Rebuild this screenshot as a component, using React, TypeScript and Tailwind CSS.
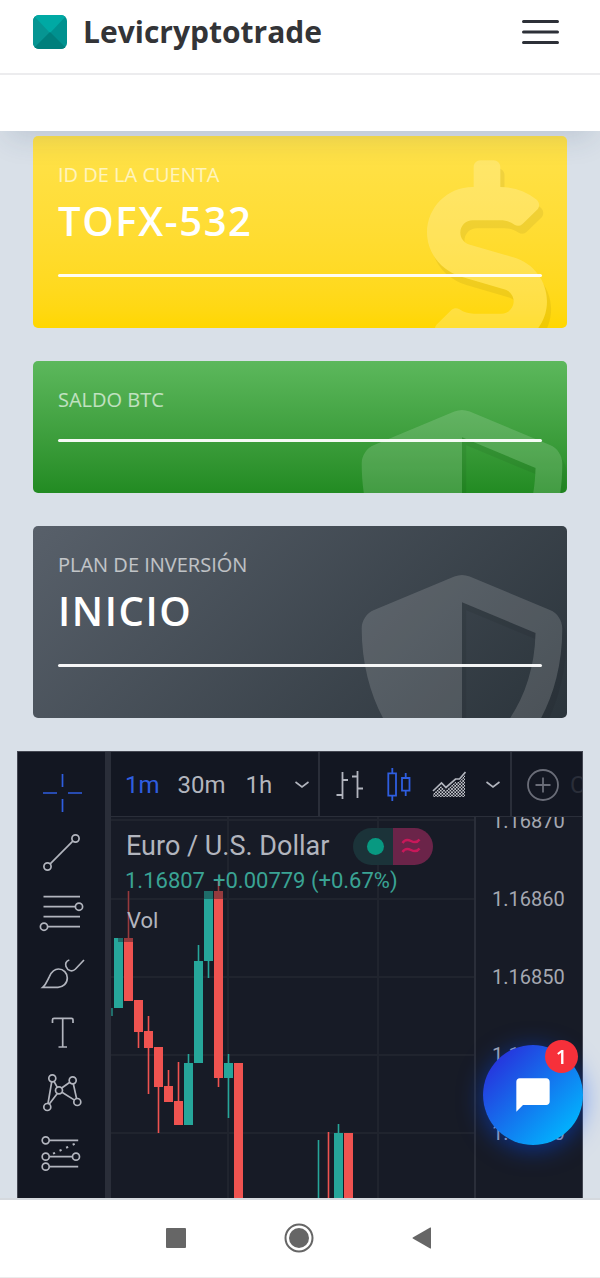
import { useId, type ReactNode } from "react";
import clsx from "clsx";

interface Candle {
  x: number;
  top: number;
  bottom: number;
  high?: number;
  low?: number;
  up?: boolean;
}

const UP = "#26a69a";
const DOWN = "#ef5350";

const candles: Candle[] = [
  { x: 3, top: 121, bottom: 191, up: true },
  { x: 13, top: 121, bottom: 184, high: 74 },
  { x: 23, top: 183, bottom: 215, low: 231 },
  { x: 33, top: 214, bottom: 231, high: 199, low: 277 },
  { x: 43, top: 230, bottom: 270, low: 316 },
  { x: 53, top: 269, bottom: 285, high: 253 },
  { x: 63, top: 284, bottom: 308, high: 245 },
  { x: 73, top: 246, bottom: 308, high: 237, up: true },
  { x: 83, top: 144, bottom: 246, high: 128, up: true },
  { x: 93, top: 74, bottom: 144, low: 161, up: true },
  { x: 103, top: 74, bottom: 261, high: 64, low: 270 },
  { x: 113, top: 246, bottom: 261, high: 237, low: 301, up: true },
  { x: 123, top: 246, bottom: 420 },
  { x: 203, top: 410, bottom: 430, high: 323, up: true },
  { x: 213, top: 410, bottom: 430, high: 315 },
  { x: 223, top: 316, bottom: 430, high: 307, up: true },
  { x: 233, top: 316, bottom: 430 },
];

const gridRows = [3, 82, 160, 238, 316];
const gridCols = [117, 267, 417, 567, 717];
const prices = ["1.16870", "1.16860", "1.16850", "1.16840", "1.16830"];

const watermarks = {
  dollar: {
    viewBox: "0 0 288 512",
    className: "right-5 top-6 w-[120px] text-white/20",
    path: "M209.2 233.4l-108-31.6C88.7 198.2 80 186.5 80 173.5c0-16.3 13.2-29.5 29.5-29.5h66.3c12.2 0 24.2 3.7 34.2 10.5 6.1 4.1 14.3 3.1 19.5-2l34.8-34c7.1-6.9 6.1-18.4-1.8-24.5C238 74.8 207.4 64.1 176 64V16c0-8.8-7.2-16-16-16h-32c-8.8 0-16 7.2-16 16v48h-2.5C45.8 64-5.4 118.7.5 183.6c4.2 46.1 39.4 83.6 83.8 96.6l102.5 30c12.5 3.7 21.2 15.3 21.2 28.3 0 16.3-13.2 29.5-29.5 29.5h-66.3C100 368 88 364.3 78 357.5c-6.1-4.1-14.3-3.1-19.5 2l-34.8 34c-7.1 6.9-6.1 18.4 1.8 24.5 24.5 19.2 55.1 29.9 86.5 30v48c0 8.8 7.2 16 16 16h32c8.8 0 16-7.2 16-16v-48.2c46.6-.9 90.3-28.6 105.7-72.7 21.5-61.6-14.6-124.8-72.5-141.7z",
  },
  shield: {
    viewBox: "0 0 512 512",
    className: "-right-0.5 top-[49px] w-[214px] text-white/15",
    path: "M466.5 83.7l-192-80a48.15 48.15 0 0 0-36.9 0l-192 80C27.7 91.1 16 108.6 16 128c0 198.5 114.5 335.7 221.5 380.3 11.8 4.9 25.1 4.9 36.9 0C360.1 472.6 496 349.3 496 128c0-19.4-11.7-36.9-29.5-44.3zM256.1 446.3l-.1-381 175.9 73.3c-3.3 151.4-82.1 261.1-175.8 307.7z",
  },
};

// translucent icon whose shadow only shows outside its own shape
function Watermark({ icon }: { icon: keyof typeof watermarks }) {
  const maskId = useId();
  const { viewBox, className, path } = watermarks[icon];

  return (
    <svg
      className={clsx("absolute h-[214px] overflow-visible", className)}
      viewBox={viewBox}
      aria-hidden="true"
    >
      <mask id={maskId} maskUnits="userSpaceOnUse" x="-20" y="-20" width="600" height="600">
        <rect x="-20" y="-20" width="600" height="600" fill="#fff" />
        <path d={path} fill="#000" />
      </mask>
      <g mask={`url(#${maskId})`}>
        <path d={path} transform="translate(10 19)" fill="#000" opacity="0.06" />
      </g>
      <path d={path} fill="currentColor" />
    </svg>
  );
}

interface AccountCardProps {
  label: string;
  value?: string;
  className: string;
  icon: keyof typeof watermarks;
}

function AccountCard({ label, value, className, icon }: AccountCardProps) {
  return (
    <section
      className={clsx(
        "relative mx-4 overflow-hidden rounded-[5px] px-[25px] pt-[23px] pb-[51px]",
        className,
      )}
    >
      <Watermark icon={icon} />
      <div className="relative">
        <h2 className="text-[20px] leading-8 text-white/65">{label}</h2>
        {value && (
          <p className="text-[40px] leading-[60px] font-semibold tracking-[0.04em] text-white">
            {value}
          </p>
        )}
        <div className="mt-[23px] h-[3px] rounded-full bg-white/95" />
      </div>
    </section>
  );
}

function Tool({ label, active, children }: { label: string; active?: boolean; children: ReactNode }) {
  return (
    <button
      aria-label={label}
      className={clsx(
        "flex h-[60px] w-full shrink-0 items-center justify-center",
        active ? "text-[#2f5ee0]" : "text-[#b2b5be]",
      )}
    >
      <svg
        className="size-12"
        viewBox="0 0 48 48"
        fill="none"
        stroke="currentColor"
        strokeWidth="1.7"
      >
        {children}
      </svg>
    </button>
  );
}

function DrawingTools() {
  return (
    <div className="flex w-[93px] shrink-0 flex-col border-r-[6px] border-[#2a2e39] bg-[#131722] pt-[11px]">
      <Tool label="Cruz" active>
        <path d="M24.5 5v13M24.5 30v13M5 24h14M30 24h14" />
      </Tool>
      <Tool label="Línea de tendencia">
        <circle cx="37.5" cy="9.5" r="3.6" />
        <circle cx="9.5" cy="37.5" r="3.6" />
        <path d="M12.2 34.8 34.8 12.2" />
      </Tool>
      <Tool label="Retroceso de Fibonacci">
        <path d="M5.5 7.7H42M5.5 17.7h32M5.5 27.7H42M9.5 37.7H42" />
        <circle cx="41" cy="17.7" r="3.6" />
        <circle cx="6" cy="37.7" r="3.6" />
      </Tool>
      <Tool label="Pincel">
        <path d="M4.7 38.3C8.5 35 9.5 31 11.5 27.3 13.5 23 16.5 20 20.5 20c5 0 8.8 4 8.8 9 0 5.5-4.3 9.3-9.3 9.3Z" />
        <path d="M31.3 11c-3.3 1-4.3 4-3.3 6.5 1.5 4 6 6 9.5 2.5l8.5-9" />
      </Tool>
      <Tool label="Texto">
        <path d="M14.5 14V10.8q0-1.5 1.5-1.5h17.5q1.5 0 1.5 1.5V14M24.7 9.3V38M20.5 38h8.5" />
      </Tool>
      <Tool label="Patrones">
        <circle cx="14.3" cy="9.3" r="3.5" />
        <circle cx="34.7" cy="11.3" r="3.5" />
        <circle cx="21" cy="21.3" r="3.5" />
        <circle cx="9.3" cy="38" r="3.5" />
        <circle cx="39.3" cy="33" r="3.5" />
        <path d="M13.7 12.8 10 34.5M16 12.3l3.3 6M23.7 19l8.5-6M19.3 24.5l-8 10.5M35.3 14.8l3.3 14.8M24 23.3l12.5 7.8" />
      </Tool>
      <Tool label="Previsión">
        <circle cx="7.7" cy="11.3" r="3.5" />
        <circle cx="7.7" cy="27.7" r="3.5" />
        <circle cx="38" cy="27.7" r="3.5" />
        <circle cx="7.7" cy="37.7" r="3.5" />
        <path d="M11.2 11.3h29M11.2 27.7h23.3M11.2 37.7h29" />
        <path d="M15 24.7 37.5 14.5" strokeWidth="2" strokeDasharray="2.2 5" />
      </Tool>
    </div>
  );
}

function Chevron() {
  return (
    <svg className="h-4 w-4 shrink-0" viewBox="0 0 16 16" fill="none" stroke="#b2b5be" strokeWidth="1.6">
      <path d="m1.5 5 6.5 5 6.5-5" />
    </svg>
  );
}

function ChartToolbar() {
  return (
    <div className="flex h-[65px] shrink-0 overflow-hidden border-b border-[#2a2e39] bg-[#131722] text-[24px] leading-8 text-[#b2b5be]">
      <div className="flex w-[209px] shrink-0 items-center border-r-2 border-[#2a2e39] pt-0.5 pl-3.5">
        <button className="mr-[18px] text-[#2f5ee0]">1m</button>
        <button className="mr-5">30m</button>
        <button className="mr-[22px]">1h</button>
        <button aria-label="Más intervalos">
          <Chevron />
        </button>
      </div>
      <div className="flex w-[192px] shrink-0 items-center border-r-2 border-[#2a2e39] pt-0.5 pl-4">
        <button aria-label="Barras" className="mr-[21px]">
          <svg className="h-8 w-7" viewBox="0 0 28 32" fill="none" stroke="currentColor" strokeWidth="1.8">
            <path d="M6.5 3v27M6.5 11H12M.5 26h6M21.5 2v27M16 7.5h5.5M21.5 19.5H27" />
          </svg>
        </button>
        <button aria-label="Velas" className="mr-[19px]">
          <svg className="h-9 w-7" viewBox="0 0 28 36" fill="none" stroke="#2f5ee0" strokeWidth="1.8">
            <path d="M7.3 1v5M7.3 29v5M20.7 6v5M20.7 24v5" />
            <path d="M3.3 6.3h7.7v22.4H3.3zM17 11h7.5v12.7H17z" />
          </svg>
        </button>
        <button aria-label="Área" className="mr-[19px]">
          <svg className="h-8 w-[34px]" viewBox="0 0 34 32" fill="none">
            <defs>
              <pattern id="dots" width="3.2" height="3.2" patternUnits="userSpaceOnUse">
                <rect width="1.6" height="1.6" fill="#c8cad0" />
                <rect x="1.6" y="1.6" width="1.6" height="1.6" fill="#c8cad0" />
              </pattern>
            </defs>
            <path d="M1 25 9 17l5 4.5L23.5 13H27l6-7v22H1z" fill="url(#dots)" />
            <path d="m1 22 8.5-8 4.5 4.5 9.5-8.5h4l6-7" stroke="#b2b5be" strokeWidth="1.7" />
          </svg>
        </button>
        <button aria-label="Más estilos">
          <Chevron />
        </button>
      </div>
      <button className="flex items-center gap-2.5 pt-0.5 pl-3.5 text-[#2a2e39]">
        <svg className="size-[34px]" viewBox="0 0 34 34" fill="none" stroke="#6a6d78" strokeWidth="1.8">
          <circle cx="17" cy="17" r="15" />
          <path d="M17 9.5v15M9.5 17h15" />
        </svg>
        C
      </button>
    </div>
  );
}

function CandlePlot() {
  return (
    <svg className="h-full w-full" aria-hidden="true">
      <g fill="#20242e">
        {gridRows.map((y) => (
          <rect key={y} x="0" y={y - 1} width="100%" height="2" />
        ))}
        {gridCols.map((x) => (
          <rect key={x} x={x - 1} y="0" width="2" height="100%" />
        ))}
      </g>
      <rect x="0" y="191" width="2" height="8" fill={UP} opacity="0.6" />
      {candles.map((c) => (
        <g key={c.x} fill={c.up ? UP : DOWN}>
          <rect
            x={c.x + 3.7}
            y={c.high ?? c.top}
            width="1.6"
            height={(c.low ?? c.bottom) - (c.high ?? c.top)}
          />
          <rect x={c.x} y={c.top} width="9" height={c.bottom - c.top} />
        </g>
      ))}
      <g fill="#131722" opacity="0.4">
        <rect x="7" y="121" width="15" height="4" />
        <rect x="93" y="74" width="9" height="8" />
        <rect x="103" y="64" width="9" height="18" />
        <rect x="16" y="74" width="3" height="47" />
      </g>
    </svg>
  );
}

function TradingChart() {
  return (
    <section className="flex min-h-0 flex-1 overflow-hidden border border-b-0 border-[#434651] bg-[#171b26] font-['Roboto',sans-serif]">
      <DrawingTools />
      <div className="flex min-w-0 flex-1 flex-col">
        <ChartToolbar />
        <div className="flex min-h-0 flex-1">
          <div className="relative min-w-0 flex-1 overflow-hidden">
            <CandlePlot />
            <div className="absolute top-2.5 left-3.5 text-[22px] whitespace-nowrap text-[#b2b5be]">
              <div className="flex h-[38px] items-center gap-6 pl-px">
                <h2 className="text-[27px] leading-[38px]">Euro / U.S. Dollar</h2>
                <div className="flex h-[37px] w-20 overflow-hidden rounded-full">
                  <span className="flex w-10 items-center justify-center bg-[#1b3339]">
                    <span className="ml-1 size-[17px] rounded-full bg-[#089981]" />
                  </span>
                  <span className="flex w-10 items-center justify-center bg-[#6b2449]">
                    <svg
                      className="mr-1 h-5 w-5"
                      viewBox="0 0 20 20"
                      fill="none"
                      stroke="#c9185a"
                      strokeWidth="2.4"
                    >
                      <path d="M1.5 7C4 3 7 3.5 10 5s6 2 8.5-1.500M1.5 16c2.5-4 5.500-3.500 8.500-2s6 2 8.500-1.500" />
                    </svg>
                  </span>
                </div>
              </div>
              <p className="leading-8 text-[#3aa394]">
                <span className="mr-2">1.16807</span>
                <span>+0.00779 (+0.67%)</span>
              </p>
              <p className="mt-2 pl-0.5 leading-8">Vol</p>
            </div>
          </div>
          <div className="w-[108px] shrink-0 overflow-hidden border-l-2 border-[#2a2e39] pl-4">
            <ul className="-mt-[35px] text-[20px] text-[#a5a8b1]">
              {prices.map((price) => (
                <li key={price} className="flex h-[78px] items-center">
                  {price}
                </li>
              ))}
            </ul>
          </div>
        </div>
      </div>
    </section>
  );
}

function Header() {
  return (
    <header className="relative z-10 bg-white shadow-[0_14px_28px_-8px_rgba(40,60,100,0.16)]">
      <div className="flex h-[75px] items-start border-b-2 border-[#ececee] pr-10 pl-[33px]">
        <a href="#" className="flex h-[63px] items-center gap-4">
          <svg className="size-[34px]" viewBox="0 0 34 34">
            <clipPath id="logo">
              <rect width="34" height="34" rx="6" />
            </clipPath>
            <g clipPath="url(#logo)">
              <rect width="34" height="34" fill="#00918f" />
              <path d="M0 0v34l17-17z" fill="#069592" />
              <path d="M0 0h34L17 18z" fill="#00a9a4" />
              <path d="M0 34h34L17 17z" fill="#007f7c" />
            </g>
          </svg>
          <span className="text-[30px] leading-[60px] font-bold text-[#333437]">Levicryptotrade</span>
        </a>
        <button aria-label="Menú" className="ml-auto flex h-[63px] items-center">
          <svg
            className="h-7 w-10"
            viewBox="0 0 40 28"
            stroke="#2d3038"
            strokeWidth="3"
            strokeLinecap="round"
          >
            <path d="M3.5 3.5h34M3.5 14h34M3.5 24.5h34" />
          </svg>
        </button>
      </div>
      <div className="h-14" />
    </header>
  );
}

function SystemNav() {
  return (
    <nav className="flex h-20 shrink-0 items-center justify-center gap-[75px] border-t-2 border-b border-t-[#d5d9de] border-b-[#ececec] bg-white pr-0.5 pb-0.5">
      <button aria-label="Recientes" className="flex w-12 justify-center">
        <span className="size-5 rounded-[1px] bg-[#666]" />
      </button>
      <button aria-label="Inicio" className="flex w-12 justify-center">
        <svg className="size-[30px]" viewBox="0 0 30 30">
          <circle cx="15" cy="15" r="13.5" fill="none" stroke="#666" strokeWidth="2" />
          <circle cx="15" cy="15" r="10" fill="#666" />
        </svg>
      </button>
      <button aria-label="Atrás" className="flex w-12 justify-center">
        <svg className="h-[22px] w-5" viewBox="0 0 20 22">
          <path d="M19 .8v20.4q0 .6-.8.3L.8 11.500q-.7-.5 0-1L18.200.5q.8-.3.8.3z" fill="#666" />
        </svg>
      </button>
    </nav>
  );
}

export default function App() {
  return (
    <div className="flex h-screen flex-col bg-[#d9e0e8] font-['Open_Sans','Noto_Sans',sans-serif]">
      <Header />
      <main className="flex min-h-0 flex-1 flex-col gap-[33px] overflow-hidden px-[17px] pt-[5px]">
        <AccountCard
          label="ID DE LA CUENTA"
          value="TOFX-532"
          icon="dollar"
          className="bg-linear-to-b from-[#ffe24a] to-[#ffd700]"
        />
        <AccountCard
          label="SALDO BTC"
          icon="shield"
          className="bg-linear-to-b from-[#5cb85c] to-[#228b22]"
        />
        <AccountCard
          label="PLAN DE INVERSIÓN"
          value="INICIO"
          icon="shield"
          className="bg-[linear-gradient(135deg,#58606a,#2b343b)]"
        />
        <TradingChart />
      </main>
      <SystemNav />

      {/* chat launcher */}
      <button
        aria-label="Abrir chat"
        className="fixed right-[17px] bottom-[133px] flex size-[100px] items-center justify-center rounded-full bg-[linear-gradient(135deg,#2a27da_5%,#00b8ff_90%)] shadow-[0_4px_24px_rgba(0,77,255,0.5)]"
      >
        <svg className="size-10" viewBox="0 0 24 24" fill="#fff">
          <path d="M20 2H4c-1.100 0-2 .9-2 2v18l4-4h14c1.100 0 2-.9 2-2V4c0-1.100-.9-2-2-2z" />
        </svg>
        <span className="absolute -top-[5px] right-[5px] flex size-[33px] items-center justify-center rounded-full bg-[#f6303a] text-[20px] font-semibold text-white">
          1
        </span>
      </button>
    </div>
  );
}
